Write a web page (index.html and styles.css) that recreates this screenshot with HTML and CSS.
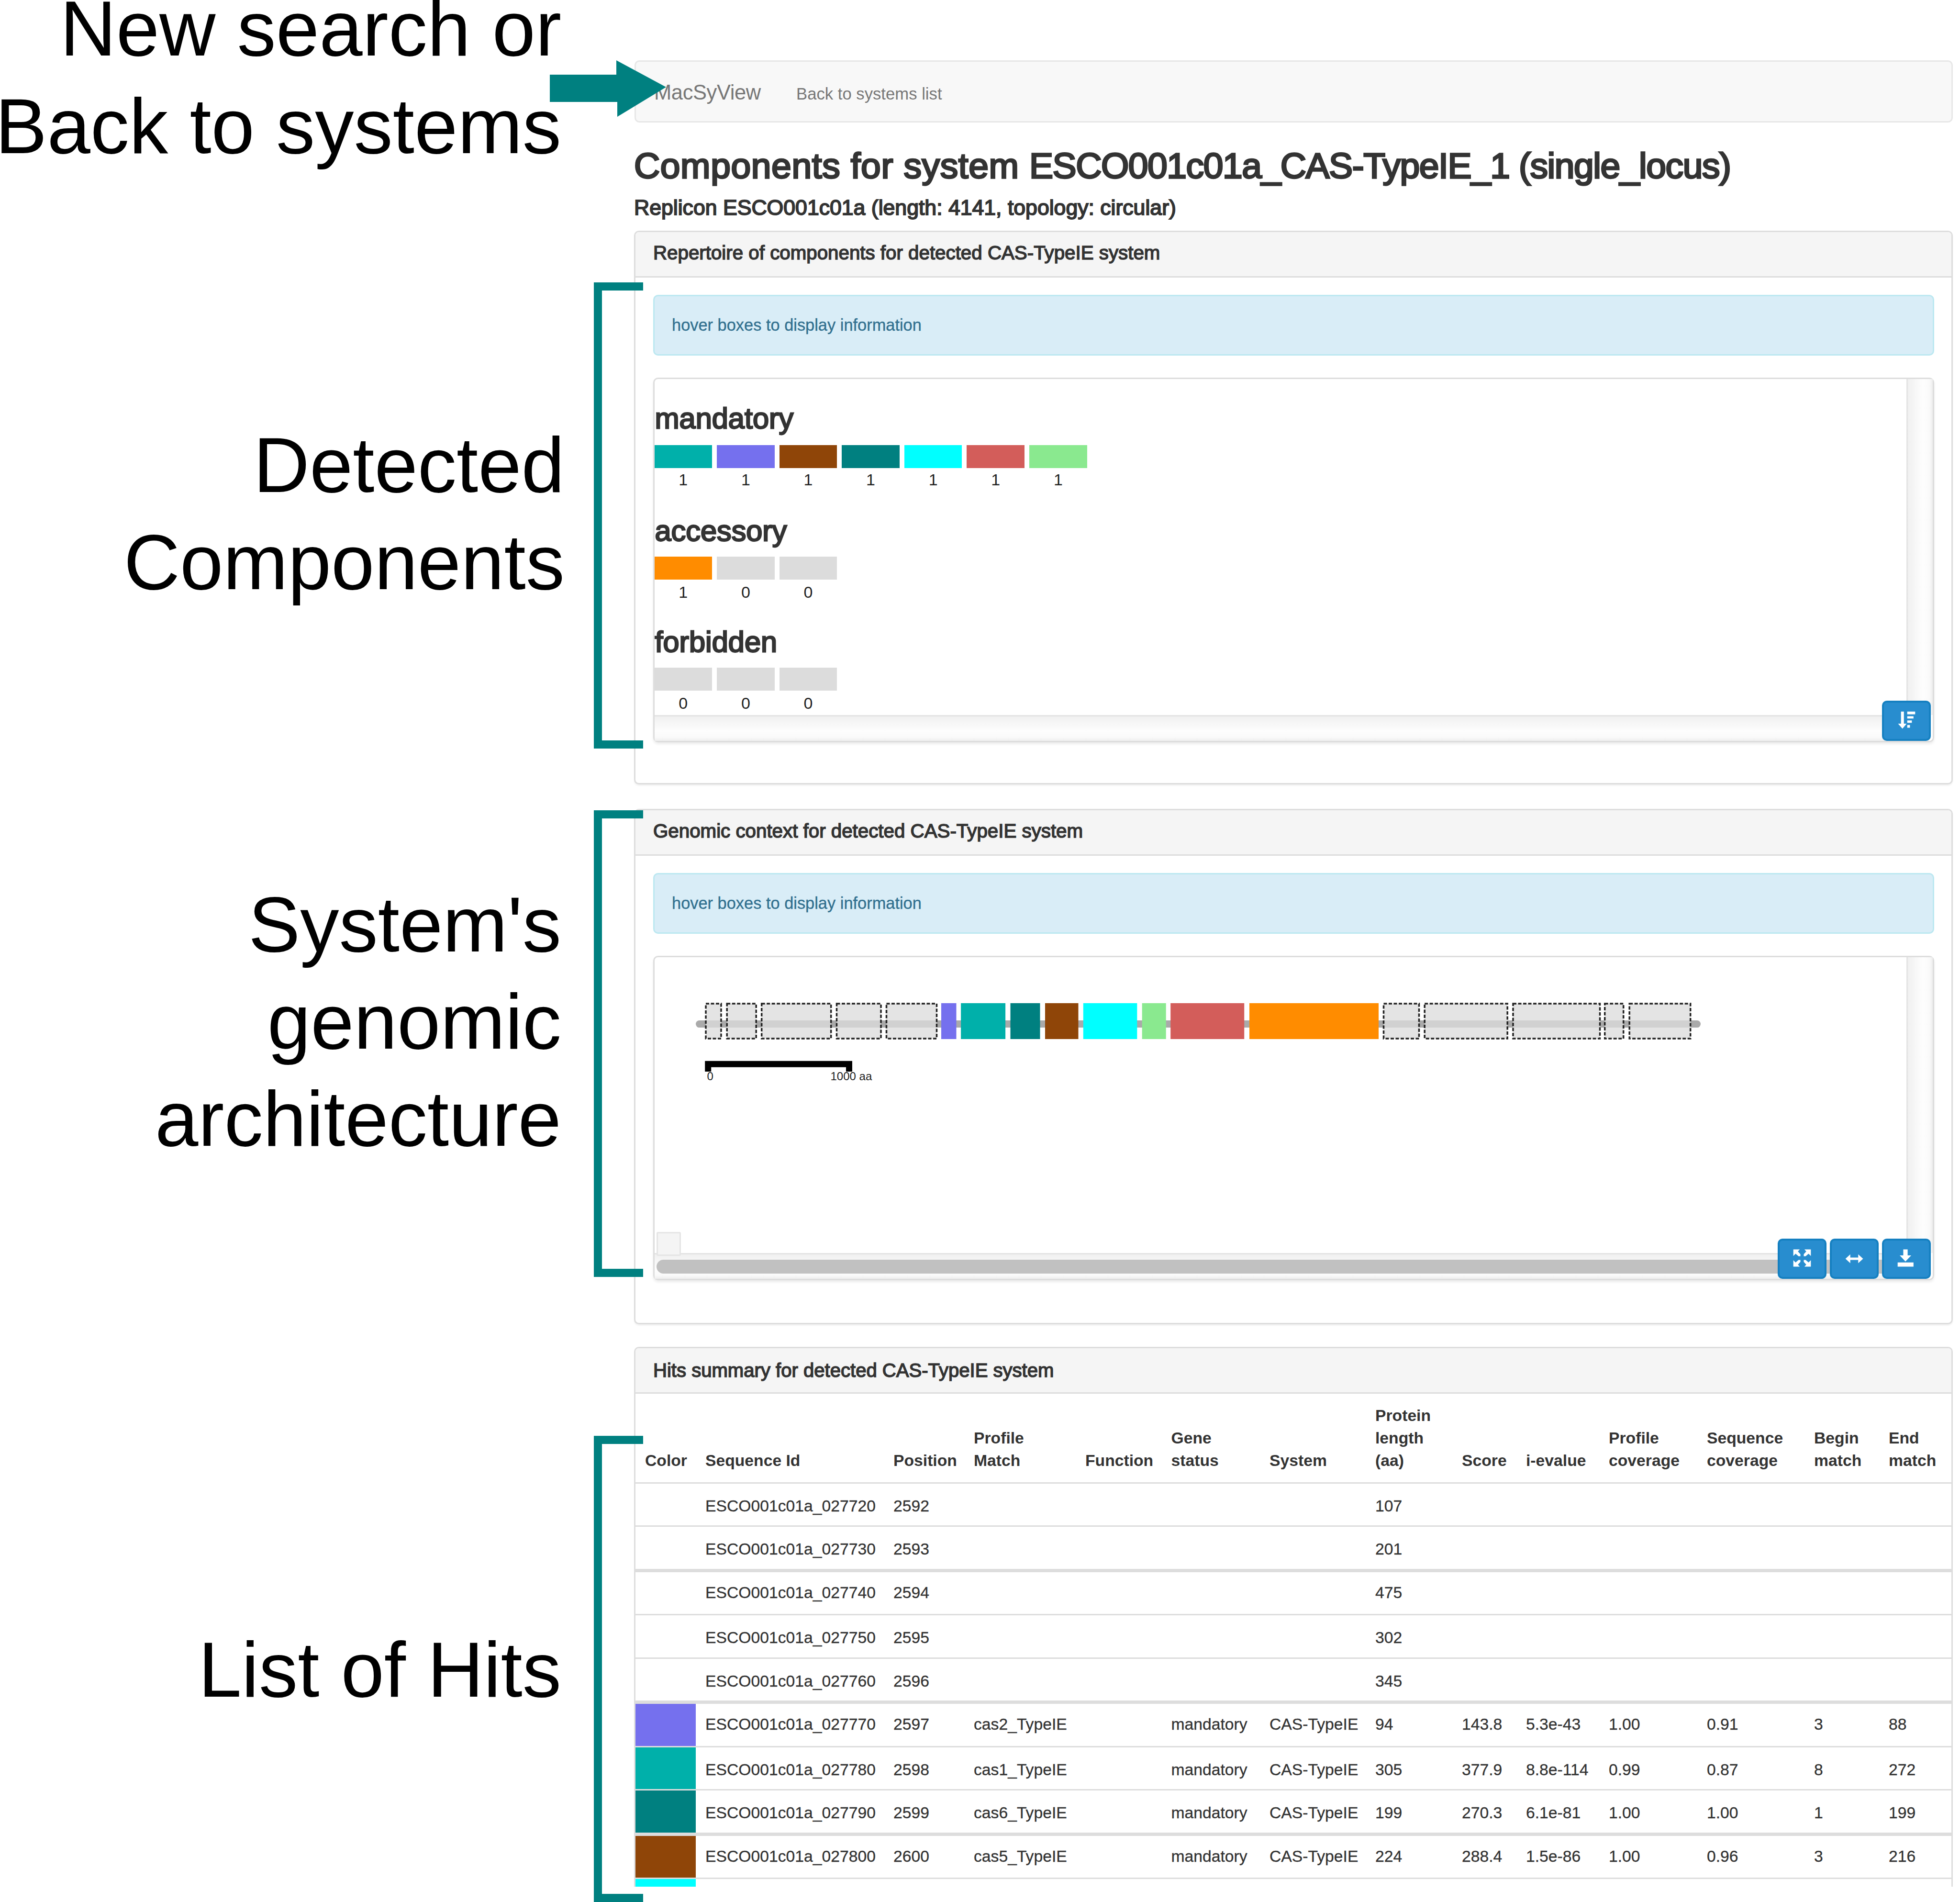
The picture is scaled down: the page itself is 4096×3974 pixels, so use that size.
FILE: index.html
```html
<!DOCTYPE html>
<html lang="en">
<head>
<meta charset="utf-8">
<title>MacSyView</title>
<link rel="stylesheet" href="styles.css">
</head>
<body>
<div class="figure">
  <main class="app">
    <nav class="navbar"><a class="brand">MacSyView</a><a class="navlink">Back to systems list</a></nav>
    <h2 class="title">Components for system <span class="system-id">ESCO001c01a_CAS-TypeIE_1 (single_locus)</span></h2>
    <h4 class="subtitle">Replicon ESCO001c01a (length: 4141, topology: circular)</h4>

    <section class="panel">
      <div class="panel-heading">Repertoire of components for detected CAS-TypeIE system</div>
      <div class="panel-body">
        <div class="alert">hover boxes to display information</div>
        <div class="well well-components">
          <div class="canvas">
            <div class="group first">
              <h3>mandatory</h3>
              <div class="boxes">
                <div class="comp"><i class="c-sea"></i>1</div>
                <div class="comp"><i class="c-purple"></i>1</div>
                <div class="comp"><i class="c-brown"></i>1</div>
                <div class="comp"><i class="c-teal"></i>1</div>
                <div class="comp"><i class="c-cyan"></i>1</div>
                <div class="comp"><i class="c-red"></i>1</div>
                <div class="comp"><i class="c-green"></i>1</div>
              </div>
            </div>
            <div class="group">
              <h3>accessory</h3>
              <div class="boxes">
                <div class="comp"><i class="c-orange"></i>1</div>
                <div class="comp"><i class="c-none"></i>0</div>
                <div class="comp"><i class="c-none"></i>0</div>
              </div>
            </div>
            <div class="group">
              <h3>forbidden</h3>
              <div class="boxes">
                <div class="comp"><i class="c-none"></i>0</div>
                <div class="comp"><i class="c-none"></i>0</div>
                <div class="comp"><i class="c-none"></i>0</div>
              </div>
            </div>
          </div>
          <div class="track-v"></div>
          <div class="track-h"></div>
          <div class="buttons">
            <button class="btn"><svg viewBox="0 0 117 96"><path d="M45.5 26h7v29h6.500L49 67 38.500 55h7zM60.500 26H79.500v6.500h-19zM60.500 37H75.500v5.500h-15zM60.500 47H71.500v6h-11zM60.500 58H67v6.500h-6.500z"/></svg></button>
          </div>
        </div>
      </div>
    </section>

    <section class="panel panel-context">
      <div class="panel-heading">Genomic context for detected CAS-TypeIE system</div>
      <div class="panel-body">
        <div class="alert">hover boxes to display information</div>
        <div class="well well-context">
          <div class="canvas">
            <svg class="genome" viewBox="1368.500 2001 2616 616">
              <line class="axis" x1="1462" y1="2140.600" x2="3547" y2="2140.600"/>
              <g class="ghost">
                <rect x="1475.500" y="2098" width="32" height="73"/>
                <rect x="1519.700" y="2098" width="61" height="73"/>
                <rect x="1592.200" y="2098" width="145" height="73"/>
                <rect x="1749" y="2098" width="92.500" height="73"/>
                <rect x="1853" y="2098" width="105" height="73"/>
                <rect x="2892" y="2098" width="74" height="73"/>
                <rect x="2977.700" y="2098" width="173" height="73"/>
                <rect x="3162.500" y="2098" width="181.500" height="73"/>
                <rect x="3354.200" y="2098" width="39" height="73"/>
                <rect x="3405.700" y="2098" width="127.500" height="73"/>
              </g>
              <g>
                <rect class="f-purple" x="1967.500" y="2097" width="31.500" height="75"/>
                <rect class="f-sea" x="2008.600" y="2097" width="93" height="75"/>
                <rect class="f-teal" x="2112" y="2097" width="62" height="75"/>
                <rect class="f-brown" x="2184.500" y="2097" width="69.500" height="75"/>
                <rect class="f-cyan" x="2264.300" y="2097" width="112.500" height="75"/>
                <rect class="f-green" x="2387.200" y="2097" width="50" height="75"/>
                <rect class="f-red" x="2446.700" y="2097" width="154" height="75"/>
                <rect class="f-orange" x="2611.500" y="2097" width="270" height="75"/>
              </g>
              <path class="scale" d="M1480.200 2240V2224.300H1775V2240"/>
              <text class="tick" x="1478" y="2258">0</text>
              <text class="tick" x="1736" y="2258">1000 aa</text>
            </svg>
          </div>
          <div class="track-v"></div>
          <div class="track-h"><div class="thumb"></div></div>
          <div class="corner-box"></div>
          <div class="buttons">
            <button class="btn"><svg viewBox="0 0 117 96"><path d="M37.500 25.500H53l-4.500 5L54.500 37v5H50L43 36l-5.500 5.500zM79.500 25.500H64l4.500 5L62.500 37v5H67L74 36l5.500 5.500zM37.500 67H53l-4.500-5L54.500 55.500v-4.500H50L43 57l-5.500-5.500zM79.500 67H64l4.500-5L62.500 55.500v-4.500H67L74 57l5.500-5.500z"/></svg></button>
            <button class="btn"><svg viewBox="0 0 117 96"><path d="M37.500 48L49 37.500v7.500H68V37.500L79.700 48 68 58.500V51H49v7.500z"/></svg></button>
            <button class="btn"><svg viewBox="0 0 117 96"><path d="M51 25.500h10.500V40H70L56.200 54.500 42.500 40H51zM37.500 57H75.500V67H37.500z"/></svg></button>
          </div>
        </div>
      </div>
    </section>

    <section class="panel panel-hits">
      <div class="panel-heading">Hits summary for detected CAS-TypeIE system</div>
      <table class="hits">
        <colgroup><col class="w1"><col class="w2"><col class="w3"><col class="w4"><col class="w5"><col class="w6"><col class="w7"><col class="w8"><col class="w9"><col class="w10"><col class="w11"><col class="w12"><col class="w13"><col class="w14"></colgroup>
        <thead>
          <tr><th>Color</th><th>Sequence Id</th><th>Position</th><th>Profile<br>Match</th><th>Function</th><th>Gene<br>status</th><th>System</th><th>Protein<br>length<br>(aa)</th><th>Score</th><th>i-evalue</th><th>Profile<br>coverage</th><th>Sequence<br>coverage</th><th>Begin<br>match</th><th>End<br>match</th></tr>
        </thead>
        <tbody>
          <tr class="h90"><td></td><td>ESCO001c01a_027720</td><td>2592</td><td></td><td></td><td></td><td></td><td>107</td><td></td><td></td><td></td><td></td><td></td><td></td></tr>
          <tr class="h91"><td></td><td>ESCO001c01a_027730</td><td>2593</td><td></td><td></td><td></td><td></td><td>201</td><td></td><td></td><td></td><td></td><td></td><td></td></tr>
          <tr class="h94 thick"><td></td><td>ESCO001c01a_027740</td><td>2594</td><td></td><td></td><td></td><td></td><td>475</td><td></td><td></td><td></td><td></td><td></td><td></td></tr>
          <tr class="h91"><td></td><td>ESCO001c01a_027750</td><td>2595</td><td></td><td></td><td></td><td></td><td>302</td><td></td><td></td><td></td><td></td><td></td><td></td></tr>
          <tr class="h90"><td></td><td>ESCO001c01a_027760</td><td>2596</td><td></td><td></td><td></td><td></td><td>345</td><td></td><td></td><td></td><td></td><td></td><td></td></tr>
          <tr class="h95 thick"><td class="c-purple"></td><td>ESCO001c01a_027770</td><td>2597</td><td>cas2_TypeIE</td><td></td><td>mandatory</td><td>CAS-TypeIE</td><td>94</td><td>143.8</td><td>5.3e-43</td><td>1.00</td><td>0.91</td><td>3</td><td>88</td></tr>
          <tr class="h90"><td class="c-sea"></td><td>ESCO001c01a_027780</td><td>2598</td><td>cas1_TypeIE</td><td></td><td>mandatory</td><td>CAS-TypeIE</td><td>305</td><td>377.9</td><td>8.8e-114</td><td>0.99</td><td>0.87</td><td>8</td><td>272</td></tr>
          <tr class="h91"><td class="c-teal"></td><td>ESCO001c01a_027790</td><td>2599</td><td>cas6_TypeIE</td><td></td><td>mandatory</td><td>CAS-TypeIE</td><td>199</td><td>270.3</td><td>6.1e-81</td><td>1.00</td><td>1.00</td><td>1</td><td>199</td></tr>
          <tr class="h94 thick"><td class="c-brown"></td><td>ESCO001c01a_027800</td><td>2600</td><td>cas5_TypeIE</td><td></td><td>mandatory</td><td>CAS-TypeIE</td><td>224</td><td>288.4</td><td>1.5e-86</td><td>1.00</td><td>0.96</td><td>3</td><td>216</td></tr>
          <tr class="last"><td class="c-cyan"></td><td></td><td></td><td></td><td></td><td></td><td></td><td></td><td></td><td></td><td></td><td></td><td></td><td></td></tr>
        </tbody>
      </table>
    </section>
  </main>

  <div class="note note-nav">New search or<br>Back to systems</div>
  <div class="note note-components">Detected<br>Components</div>
  <div class="note note-context">System's<br>genomic<br>architecture</div>
  <div class="note note-hits">List of Hits</div>
  <svg class="arrow" viewBox="0 0 243 118"><path d="M0 30H139V0L243 56 141 118V87H0z"/></svg>
  <div class="bracket bracket-components"></div>
  <div class="bracket bracket-context"></div>
  <div class="bracket bracket-hits"></div>
</div>
</body>
</html>
```
FILE: styles.css
```css
* { box-sizing: border-box; }
html, body { margin: 0; background: #fff; }
body { font-family: "Liberation Sans", Arial, sans-serif; color: #333; }

.figure { position: relative; width: 4096px; height: 3974px; overflow: hidden; }
.app { margin-left: 1325px; width: 2756px; padding-top: 126px; }

/* navigation and titles */
.navbar { display: flex; align-items: baseline; height: 130px; padding: 38px 0 0 38px; margin-left: 1px; border: 3px solid #e7e7e7; border-radius: 10px; background: #f8f8f8; color: #777; line-height: 52px; }
.brand { width: 297px; font-size: 43.5px; letter-spacing: -.4px; }
.navlink { font-size: 34.7px; }
.title, .subtitle, .group h3 { font-weight: 400; -webkit-text-stroke: .045em #333; }
.title { margin: 49px 0 0; font-size: 75px; line-height: 82px; letter-spacing: .6px; white-space: nowrap; }
.system-id { letter-spacing: -1.44px; }
.subtitle { margin: 21.5px 0 23px; font-size: 44.6px; line-height: 50px; white-space: nowrap; }

/* panels */
.panel { border: 3px solid #ddd; border-radius: 10px; background: #fff; box-shadow: 0 3px 3px rgba(0,0,0,.05); height: 1157px; overflow: hidden; }
.panel-heading { height: 95px; padding: 15.8px 37px 0; border-bottom: 3px solid #ddd; background: #f5f5f5; font-size: 40.3px; line-height: 57px; -webkit-text-stroke: .04em #333; }
.panel-body { padding: 36px 36px 0 36.5px; }
.panel-context { margin-top: 51px; height: 1077px; }
.panel-hits { margin-top: 47.5px; height: 1127.5px; border-bottom: 0; border-radius: 10px 10px 0 0; box-shadow: none; }
.panel-hits .panel-heading { padding-top: 18px; font-size: 40.1px; }
.alert { height: 127px; padding: 36.3px 0 0 36.5px; border: 3px solid #bce8f1; border-radius: 10px; background: #d9edf7; color: #31708f; font-size: 34.4px; line-height: 48px; -webkit-text-stroke: .01em; }

/* scrollable drawings */
.well { position: relative; display: grid; grid-template-columns: minmax(0, 1fr) 55px; grid-template-rows: minmax(0, 1fr) 54px; margin-top: 46.5px; border: 3px solid #ddd; border-radius: 10px; box-shadow: 0 4px 5px rgba(0,0,0,.07); }
.well-components { height: 762px; }
.well-context { height: 678px; }
.canvas { overflow: hidden; }
.track-v { border-left: 3px solid #e4e4e4; background: linear-gradient(90deg, #f0f0f0, #f8f8f8 35%, #fdfdfd 60%, #fafafa 85%, #eee); }
.track-h { grid-column: 1; border-top: 3px solid #e4e4e4; background: linear-gradient(#f0f0f0, #f8f8f8 35%, #fdfdfd 60%, #fafafa 85%, #eee); }
.thumb { width: 2590px; height: 29px; margin: 11px 0 0 4px; border-radius: 15px; background: #c1c1c1; }
.corner-box { position: absolute; left: 4.500px; bottom: 48px; width: 51px; height: 50px; border: 3px solid #e5e5e5; border-radius: 3px; background: #f4f4f4; }
.buttons { position: absolute; right: 4px; bottom: 0; display: flex; gap: 7px; }
.btn { width: 102px; height: 84px; padding: 0; border: 4px solid #1580c1; border-radius: 10px; background: #288dcf; }
.btn svg { display: block; width: 102px; height: 84px; margin: -4px; fill: #fff; }

.group { height: 232.5px; padding-top: 50.4px; }
.group.first { padding-top: 48px; }
.group h3 { margin: 0 0 19.7px 1px; font-size: 61.3px; line-height: 68px; }
.group.first h3 { margin-bottom: 21.6px; }
.boxes { display: flex; gap: 10px; }
.comp { width: 120.6px; text-align: center; font-size: 34px; line-height: 48px; color: #222; }
.comp i { display: block; height: 48px; margin-bottom: 2px; }
.first .comp i { margin-bottom: 0; }

.c-sea { background: #00b0aa; } .c-purple { background: #7570ee; } .c-brown { background: #8f4508; }
.c-teal { background: #008080; } .c-cyan { background: #0ff; } .c-red { background: #d35d5a; }
.c-green { background: #8ae98f; } .c-orange { background: #ff8c00; } .c-none { background: #dcdcdc; }

/* genome map */
.genome { display: block; width: 2616px; height: 616px; }
.axis { stroke: #aaa; stroke-width: 15; stroke-linecap: round; }
.ghost rect { fill: #dcdcdc; fill-opacity: .78; stroke: #222; stroke-width: 3.5; stroke-dasharray: 7 3.5; }
.f-sea { fill: #00b0aa; } .f-purple { fill: #7570ee; } .f-brown { fill: #8f4508; } .f-teal { fill: #008080; }
.f-cyan { fill: #0ff; } .f-red { fill: #d35d5a; } .f-green { fill: #8ae98f; } .f-orange { fill: #ff8c00; }
.scale { fill: none; stroke: #000; stroke-width: 13; }
.tick { font-size: 24px; fill: #222; }

/* hits table */
.hits { width: 2750px; table-layout: fixed; border-collapse: separate; border-spacing: 0; font-size: 33.7px; line-height: 47.2px; }
.hits th { height: 185px; padding: 0 0 21.5px 20px; text-align: left; vertical-align: bottom; font-weight: 700; white-space: nowrap; }
.hits td { padding: 23px 0 0 20px; border-top: 3px solid #ddd; vertical-align: top; white-space: nowrap; -webkit-text-stroke: .01em; }
.hits .thick td { border-top-width: 7px; padding-top: 19px; }
.h90 { height: 90px; } .h91 { height: 91px; } .h94 { height: 94px; } .h95 { height: 95px; }
.hits td { background-clip: padding-box; }
.hits .last td { height: 20px; padding: 0; }
.w1 { width: 126px; } .w2 { width: 393px; } .w3 { width: 168px; } .w4 { width: 233px; } .w5 { width: 179.5px; }
.w6 { width: 205.5px; } .w7 { width: 221px; } .w8 { width: 181px; } .w9 { width: 134px; } .w10 { width: 173px; }
.w11 { width: 205px; } .w12 { width: 224px; } .w13 { width: 156px; } .w14 { width: 151px; }

/* annotations laid over the interface */
.note { position: absolute; left: -100px; width: 1273px; text-align: right; font-size: 162.5px; line-height: 203.1px; color: #000; white-space: nowrap; }
.note-nav { top: -41.6px; }
.note-components { top: 869.500px; width: 1280px; }
.note-context { top: 1830px; }
.note-hits { top: 3387px; }
.arrow { position: absolute; left: 1148.500px; top: 125.500px; width: 243px; height: 118px; fill: #008080; }
.bracket { position: absolute; left: 1241px; width: 103px; border: 17px solid #008080; border-right: 0; }
.bracket-components { top: 590px; height: 974px; }
.bracket-context { top: 1692.500px; height: 975px; }
.bracket-hits { top: 3000px; height: 974px; }
```
